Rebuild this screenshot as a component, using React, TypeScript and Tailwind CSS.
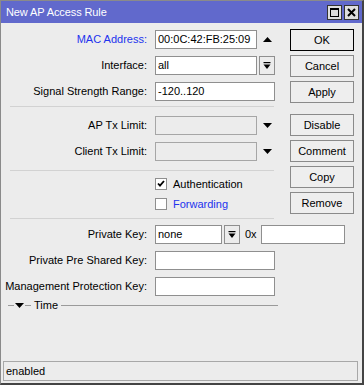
import React from 'react';

const font = { fontFamily: '"Liberation Sans", Arial, sans-serif' };

function DropIcon() {
  return (
    <svg width="8" height="8" viewBox="0 0 8 8">
      <rect x="0.5" y="0" width="7" height="1.2" fill="#000" />
      <path d="M0.5 2.5h7L4 7z" fill="#000" />
    </svg>
  );
}

function Field({ label, blue, children }: { label: string; blue?: boolean; children: React.ReactNode }) {
  return (
    <div className="flex h-[19px] items-center">
      <div className={`w-[146px] shrink-0 text-right ${blue ? 'text-[#2233ee]' : 'text-black'}`}>{label}</div>
      <div className="ml-[8px] flex h-full shrink-0 items-center">{children}</div>
    </div>
  );
}

function Input({ w, value, disabled }: { w: string; value?: string; disabled?: boolean }) {
  return (
    <div className={`flex h-[19px] shrink-0 items-center border px-[2px] ${w} ${disabled ? 'border-[#a6a6a6] bg-[#ececec]' : 'border-[#8f8f8f] bg-white'}`}>
      {value}
    </div>
  );
}

function DropBtn() {
  return (
    <div className="ml-[2px] flex h-[19px] w-[16px] shrink-0 items-center justify-center border border-[#8f8f8f] bg-[#ececec]">
      <DropIcon />
    </div>
  );
}

function Triangle({ up }: { up?: boolean }) {
  return (
    <svg width="9" height="5" viewBox="0 0 9 5" className="ml-[6px] shrink-0">
      <path d={up ? 'M0 5h9L4.5 0z' : 'M0 0h9L4.5 5z'} fill="#000" />
    </svg>
  );
}

function Sep() {
  return <div className="ml-[9px] w-[264px] border-t border-[#d2d2d2]" />;
}

function Check({ checked, label, blue }: { checked?: boolean; label: string; blue?: boolean }) {
  return (
    <div className="flex h-[16px] items-center">
      <div className="ml-[154px] flex h-[12px] w-[12px] items-center justify-center border border-[#8f8f8f] bg-white">
        {checked && (
          <svg width="8" height="8" viewBox="0 0 8 8">
            <path d="M1 3.5l2 2.2L7 1" stroke="#000" strokeWidth="1.8" fill="none" />
          </svg>
        )}
      </div>
      <span className={`ml-[6px] ${blue ? 'text-[#2233ee]' : 'text-black'}`}>{label}</span>
    </div>
  );
}

function Btn({ label, primary }: { label: string; primary?: boolean }) {
  return (
    <div className={`flex h-[22px] w-[64px] items-center justify-center border bg-[#eeeeee] ${primary ? 'border-black' : 'border-[#8a8a8a]'}`}>
      {label}
    </div>
  );
}

export default function App() {
  return (
    <div
      style={font}
      className="flex h-[385px] w-[364px] flex-col border-l border-t border-r-2 border-b-2 border-l-[#8a8a8a] border-t-[#8a8a8a] border-r-[#444] border-b-[#444] bg-[#ececec] text-[11px] leading-none text-black"
    >
      <div className="flex h-[22px] items-center justify-between bg-[#6169cc] pl-[5px] pr-[3px]">
        <span className="tracking-[-0.1px] text-white">New AP Access Rule</span>
        <div className="flex gap-[2px]">
          <div className="flex h-[15px] w-[15px] items-center justify-center border border-[#333] bg-[#dedede]">
            <div className="h-[9px] w-[9px] border border-t-2 border-black" />
          </div>
          <div className="flex h-[15px] w-[15px] items-center justify-center border border-[#333] bg-[#dedede]">
            <svg width="9" height="9" viewBox="0 0 9 9">
              <path d="M1 1l7 7M8 1l-7 7" stroke="#000" strokeWidth="2" />
            </svg>
          </div>
        </div>
      </div>

      <div className="flex">
        <div className="flex w-[289px] shrink-0 flex-col pt-[7px]">
          <div className="flex flex-col gap-[7px]">
            <Field label="MAC Address:" blue>
              <Input w="w-[102px]" value="00:0C:42:FB:25:09" />
              <Triangle up />
            </Field>
            <Field label="Interface:">
              <Input w="w-[102px]" value="all" />
              <DropBtn />
            </Field>
            <Field label="Signal Strength Range:">
              <Input w="w-[120px]" value="-120..120" />
            </Field>
          </div>
          <div className="mt-[5px]">
            <Sep />
          </div>
          <div className="mt-[9px] flex flex-col gap-[7px]">
            <Field label="AP Tx Limit:">
              <Input w="w-[102px]" disabled />
              <Triangle />
            </Field>
            <Field label="Client Tx Limit:">
              <Input w="w-[102px]" disabled />
              <Triangle />
            </Field>
          </div>
          <div className="mt-[9px]">
            <Sep />
          </div>
          <div className="mt-[5px] flex flex-col gap-[4px]">
            <Check checked label="Authentication" />
            <Check label="Forwarding" blue />
          </div>
          <div className="mt-[6px]">
            <Sep />
          </div>
          <div className="mt-[6px] flex flex-col gap-[7px]">
            <Field label="Private Key:">
              <Input w="w-[67px]" value="none" />
              <DropBtn />
              <span className="ml-[5px]">0x</span>
              <div className="ml-[4px] h-[19px] w-[84px] shrink-0 border border-[#8f8f8f] bg-white" />
            </Field>
            <Field label="Private Pre Shared Key:">
              <Input w="w-[120px]" />
            </Field>
            <Field label="Management Protection Key:">
              <Input w="w-[120px]" />
            </Field>
          </div>
          <div className="mt-[3px] flex h-[12px] items-center">
            <div className="ml-[7px] w-[6px] border-t border-[#9a9a9a]" />
            <svg width="9" height="5" viewBox="0 0 9 5" className="mx-[1px]">
              <path d="M0 0h9L4.5 5z" fill="#000" />
            </svg>
            <div className="w-[6px] border-t border-[#9a9a9a]" />
            <span className="ml-[3px]">Time</span>
            <div className="ml-[3px] w-[217px] border-t border-[#9a9a9a]" />
          </div>
        </div>

        <div className="flex flex-col pt-[6px]">
          <div className="flex flex-col gap-[4px]">
            <Btn label="OK" primary />
            <Btn label="Cancel" />
            <Btn label="Apply" />
          </div>
          <div className="mt-[11px] flex flex-col gap-[4px]">
            <Btn label="Disable" />
            <Btn label="Comment" />
            <Btn label="Copy" />
            <Btn label="Remove" />
          </div>
        </div>
      </div>

      <div className="mb-[2px] ml-[2px] mr-[4px] mt-auto flex h-[20px] items-center border border-[#a8a8a8] px-[2px]">
        enabled
      </div>
    </div>
  );
}
